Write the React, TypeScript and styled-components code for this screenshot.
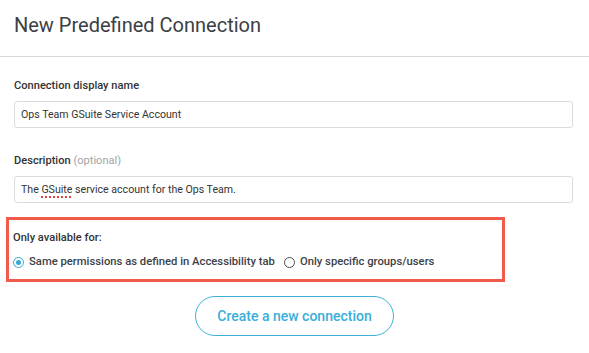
import React from 'react';
import styled, { createGlobalStyle } from 'styled-components';

const GlobalStyle = createGlobalStyle`
  body {
    margin: 0;
    background: #ffffff;
    font-family: Roboto, 'Liberation Sans', sans-serif;
    color: #333;
  }
`;

const Page = styled.div`
  width: 589px;
  height: 353px;
  overflow: hidden;
`;

const Header = styled.header`
  padding: 14px 14px 0;
  height: 57px;
  box-sizing: border-box;
  border-bottom: 1px solid #d3d7dc;
`;

const Title = styled.h1`
  margin: 0;
  font-size: 20px;
  line-height: 23px;
  font-weight: 400;
  color: #3b4045;
`;

const Body = styled.div`
  padding: 22px 16px 0 14px;
  display: flex;
  flex-direction: column;
`;

const Group = styled.div<{ $last?: boolean }>`
  display: flex;
  flex-direction: column;
  gap: 9px;
  margin-bottom: ${(p) => (p.$last ? '14px' : '26px')};
`;

const Label = styled.label`
  font-size: 11.1px;
  line-height: 13px;
  font-weight: 500;
  color: #333;
`;

const Hint = styled.span`
  font-weight: 400;
  color: #a0a4a8;
`;

const Field = styled.div`
  height: 27px;
  box-sizing: border-box;
  border: 1px solid #d9dcdf;
  border-radius: 3px;
  padding: 0 6px;
  display: flex;
  align-items: center;
  font-size: 10.6px;
  color: #333;
`;

const Misspelled = styled.span`
  text-decoration: underline dotted #e0443a;
  text-decoration-thickness: 1.5px;
  text-underline-offset: 3px;
`;

const Highlight = styled.div`
  margin-left: -8px;
  width: 499px;
  box-sizing: border-box;
  border: 3px solid #f25a4c;
  padding: 11px 4px 10px;
  display: flex;
  flex-direction: column;
  gap: 11px;
`;

const RadioRow = styled.div`
  display: flex;
  align-items: center;
  gap: 9px;
`;

const RadioOption = styled.label`
  display: flex;
  align-items: center;
  gap: 5px;
  font-size: 11.25px;
  line-height: 14px;
  font-weight: 500;
  color: #3d4247;
`;

const Circle = styled.span<{ $checked?: boolean }>`
  width: 11px;
  height: 11px;
  box-sizing: border-box;
  border-radius: 50%;
  border: 1px solid ${(p) => (p.$checked ? '#35a9d6' : '#4a4f54')};
  display: flex;
  align-items: center;
  justify-content: center;
  &::after {
    content: '';
    width: 5px;
    height: 5px;
    border-radius: 50%;
    background: ${(p) => (p.$checked ? '#35a9d6' : 'transparent')};
  }
`;

const Actions = styled.div`
  display: flex;
  justify-content: center;
  padding-top: 14px;
  margin-right: -2px;
`;

const Button = styled.button`
  width: 199px;
  height: 40px;
  border: 1px solid #3fb1da;
  border-radius: 20px;
  background: #fff;
  color: #3aaed8;
  font-family: Roboto, 'Liberation Sans', sans-serif;
  font-size: 14px;
  font-weight: 500;
  cursor: pointer;
`;

const App: React.FC = () => {
  return (
    <Page>
      <GlobalStyle />
      <Header>
        <Title>New Predefined Connection</Title>
      </Header>
      <Body>
        <Group>
          <Label>Connection display name</Label>
          <Field>Ops Team GSuite Service Account</Field>
        </Group>
        <Group $last>
          <Label>
            Description <Hint>(optional)</Hint>
          </Label>
          <Field>
            The&nbsp;<Misspelled>GSuite</Misspelled>&nbsp;service account for the Ops Team.
          </Field>
        </Group>
        <Highlight>
          <Label>Only available for:</Label>
          <RadioRow>
            <RadioOption>
              <Circle $checked />
              Same permissions as defined in Accessibility tab
            </RadioOption>
            <RadioOption>
              <Circle />
              Only specific groups/users
            </RadioOption>
          </RadioRow>
        </Highlight>
        <Actions>
          <Button type="button">Create a new connection</Button>
        </Actions>
      </Body>
    </Page>
  );
};

export default App;
